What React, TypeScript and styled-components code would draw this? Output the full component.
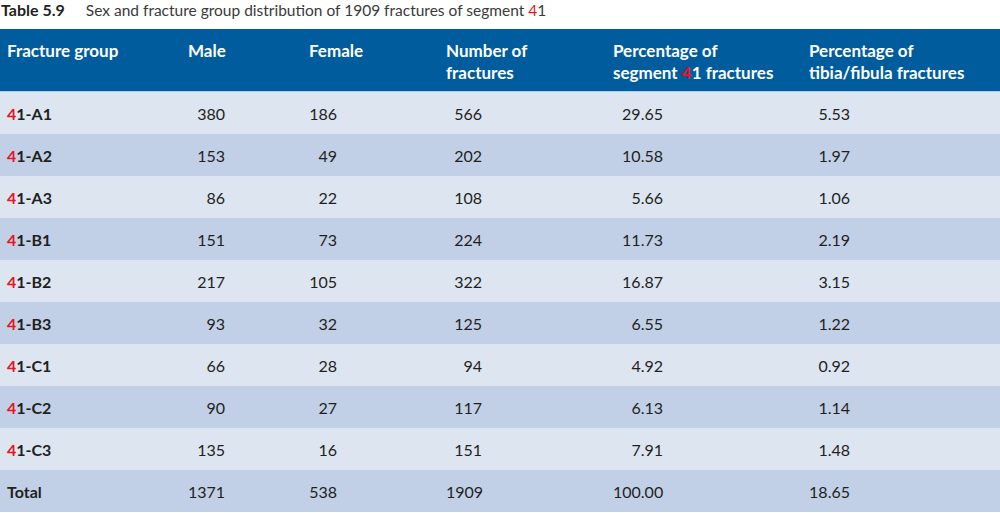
import styled, {createGlobalStyle} from 'styled-components';

const GlobalStyle = createGlobalStyle`
    body {
        margin: 0;
        background: #ffffff;
        font-family: Lato, "Open Sans", sans-serif;
        color: #231f20;
    }
`;

interface Row {
    group: string;
    values: string[];
}

const COLUMNS = [181, 121, 137, 167, 196, 198];
// right edge of numbers, measured from header start
const NUM_WIDTH = [37, 28, 36, 50, 41];

const ROWS: Row[] = [
    {group: 'A1', values: ['380', '186', '566', '29.65', '5.53']},
    {group: 'A2', values: ['153', '49', '202', '10.58', '1.97']},
    {group: 'A3', values: ['86', '22', '108', '5.66', '1.06']},
    {group: 'B1', values: ['151', '73', '224', '11.73', '2.19']},
    {group: 'B2', values: ['217', '105', '322', '16.87', '3.15']},
    {group: 'B3', values: ['93', '32', '125', '6.55', '1.22']},
    {group: 'C1', values: ['66', '28', '94', '4.92', '0.92']},
    {group: 'C2', values: ['90', '27', '117', '6.13', '1.14']},
    {group: 'C3', values: ['135', '16', '151', '7.91', '1.48']},
];

const TOTAL = ['1371', '538', '1909', '100.00', '18.65'];

const App = () => {
    return (
        <Page>
            <GlobalStyle/>
            <Caption>
                <b>Table 5.9</b>
                <span>Sex and fracture group distribution of 1909 fractures of segment <Red>4</Red>1</span>
            </Caption>
            <Table>
                <HeadRow>
                    <HeadCell>Fracture group</HeadCell>
                    <HeadCell>Male</HeadCell>
                    <HeadCell>Female</HeadCell>
                    <HeadCell>Number of<br/>fractures</HeadCell>
                    <HeadCell>Percentage of<br/>segment <Red>4</Red>1 fractures</HeadCell>
                    <HeadCell>Percentage of<br/>tibia/fibula fractures</HeadCell>
                </HeadRow>
                {ROWS.map((row, i) => (
                    <BodyRow key={row.group} $shade={i % 2 === 1}>
                        <LabelCell><Red>4</Red>1-{row.group}</LabelCell>
                        {row.values.map((v, j) => (
                            <Cell key={j}><Num $width={NUM_WIDTH[j]}>{v}</Num></Cell>
                        ))}
                    </BodyRow>
                ))}
                <BodyRow $shade>
                    <LabelCell>Total</LabelCell>
                    {TOTAL.map((v, j) => (
                        <Cell key={j}><Num $width={NUM_WIDTH[j]}>{v}</Num></Cell>
                    ))}
                </BodyRow>
            </Table>
        </Page>
    );
}

const Page = styled.div`
    width: 1000px;
`;

const Caption = styled.div`
    display: flex;
    gap: 21px;
    height: 29px;
    padding-left: 1px;
    font-size: 15.5px;
    line-height: 20px;
    color: #3a3a3a;

    b {
        color: #231f20;
        font-size: 16px;
        font-weight: 700;
    }
`;

const Red = styled.span`
    color: #e8141f;
`;

const Table = styled.div`
    display: flex;
    flex-direction: column;
`;

const gridColumns = COLUMNS.map((c) => `${c}px`).join(' ');

const HeadRow = styled.div`
    display: grid;
    grid-template-columns: ${gridColumns};
    height: 63px;
    box-sizing: border-box;
    background: #005c9d;
    border-bottom: 1px solid #b4cbe6;
`;

const HeadCell = styled.div`
    padding: 11px 0 0 7px;
    font-size: 17px;
    line-height: 22px;
    font-weight: 700;
    color: #ffffff;
    white-space: nowrap;
`;

const BodyRow = styled.div<{$shade?: boolean}>`
    display: grid;
    grid-template-columns: ${gridColumns};
    height: 42px;
    align-items: center;
    background: ${(props) => props.$shade ? '#c1d0e6' : '#dde5f1'};
`;

const LabelCell = styled.div`
    padding-left: 7px;
    font-size: 16px;
    font-weight: 700;
    color: #231f20;
`;

const Cell = styled.div`
    padding-left: 7px;
    font-size: 16px;
    color: #231f20;
`;

const Num = styled.span<{$width: number}>`
    display: inline-block;
    width: ${(props) => props.$width}px;
    text-align: right;
    white-space: nowrap;
`;

export default App;
